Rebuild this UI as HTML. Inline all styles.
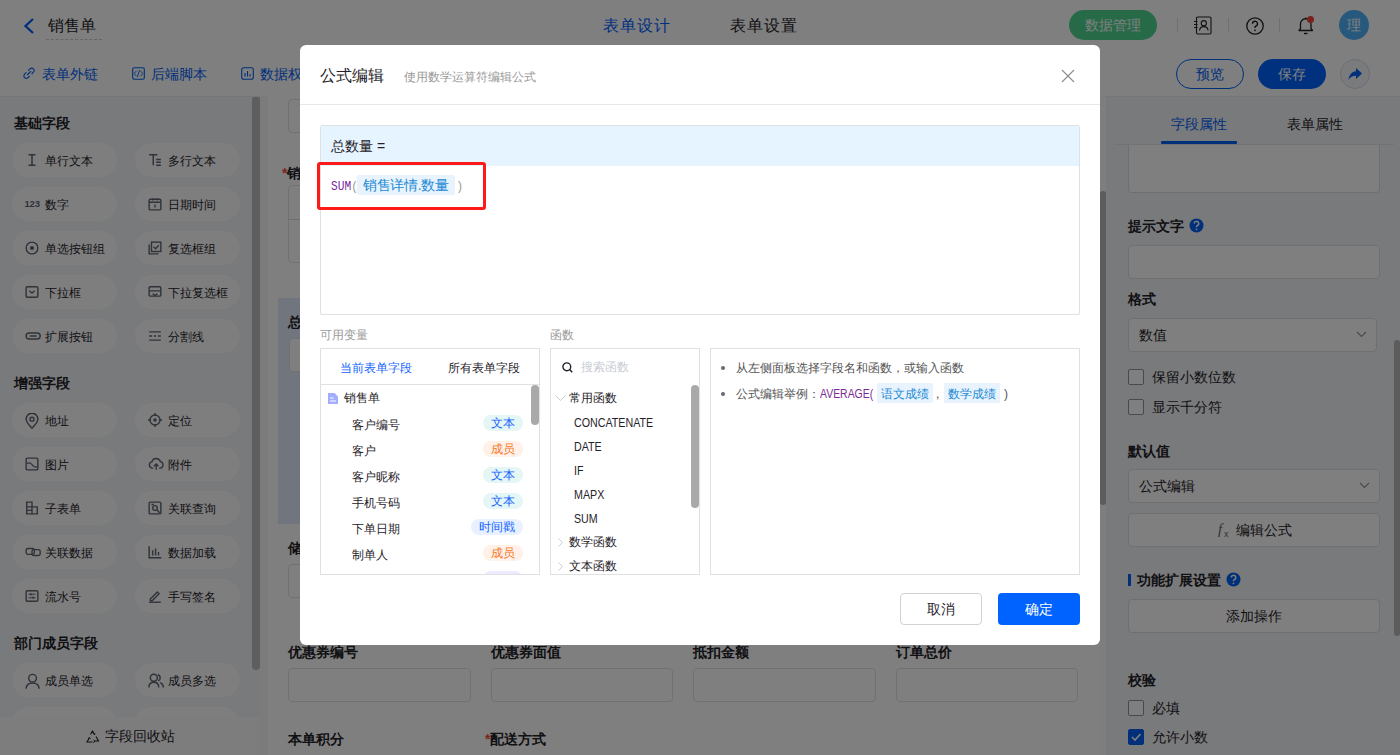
<!DOCTYPE html>
<html><head><meta charset="utf-8">
<style>
*{box-sizing:border-box;margin:0;padding:0}
html,body{width:1400px;height:755px;overflow:hidden;background:#fff;font-family:"Liberation Sans",sans-serif;color:#1f2329}
.a{position:absolute}
svg{display:block}
/* header */
#hdr{left:0;top:0;width:1400px;height:51px;background:#fff;border-bottom:1px solid #e6e6e6}
#tb{left:0;top:50px;width:1400px;height:46px;background:#fff}
.tl{font-size:14px;color:#0060f5;line-height:14px;white-space:nowrap}
/* left panel */
#lp{left:0;top:96px;width:260px;height:659px;background:#f3f4f6}
.sec{font-size:14px;font-weight:bold;color:#1f2329;line-height:14px;left:14px;white-space:nowrap}
.pill{width:105px;height:34px;border-radius:17px;background:#fdfdfe}
.pill span{position:absolute;left:33px;top:12px;font-size:12px;line-height:12px;color:#1f2329;white-space:nowrap}
.pill svg{position:absolute;left:14px;top:11px;transform:scale(1.17);transform-origin:6px 6px}
/* canvas */
#cv{left:260px;top:96px;width:846px;height:659px;background:#fff}
.lbl{font-size:14px;font-weight:bold;line-height:14px;color:#1f2329;white-space:nowrap}
.inp{border:1px solid #e1e3e8;border-radius:4px;background:#fff}
/* right panel */
#rp{left:1106px;top:96px;width:294px;height:659px;background:#f3f4f7}
.rl{font-size:14px;font-weight:bold;line-height:14px;color:#1f2329;white-space:nowrap;left:1128px}
.rinp{left:1128px;width:252px;height:34px;border:1px solid #dcdfe6;border-radius:4px;background:#fff}
.cb{width:16px;height:16px;border:1px solid #8f959e;border-radius:2px;background:#fff;left:1128px}
.ct{font-size:14px;line-height:14px;color:#1f2329;left:1152px;white-space:nowrap}
/* mask */
#mask{left:0;top:0;width:1400px;height:755px;background:rgba(0,0,0,.5)}
/* modal */
#md{left:300px;top:45px;width:800px;height:600px;background:#fff;border-radius:6px;overflow:hidden}
.m{position:absolute}
.gray{color:#999}
.tag{position:absolute;height:16px;border-radius:8px;font-size:12px;line-height:17px;text-align:center}
.t-txt{background:#e5f6f7;color:#1665ff;width:40px;left:162px}
.t-mem{background:#fff0e8;color:#f5792a;width:40px;left:162px}
.t-time{background:#e8f1ff;color:#1665ff;width:52px;left:150px}
.vrow{position:absolute;left:31px;font-size:12px;line-height:12px;color:#1f2329;white-space:nowrap}
.frow{position:absolute;left:23px;font-size:12px;line-height:12px;color:#1f2329;white-space:nowrap;transform:scaleX(0.89);transform-origin:0 0}
</style></head><body>

<!-- ================= BACKGROUND APP ================= -->
<div id="hdr" class="a"></div>
<div class="a" style="left:23px;top:18px"><svg width="12" height="16" viewBox="0 0 12 16"><path d="M10 1 L2.5 8 L10 15" fill="none" stroke="#0060f5" stroke-width="2.3"/></svg></div>
<div class="a" style="left:48px;top:18px;font-size:16px;line-height:16px;color:#1f2329">销售单</div>
<div class="a" style="left:46px;top:39px;width:56px;border-top:1px dashed #c9cdd4"></div>
<div class="a" style="left:603px;top:18px;font-size:16px;line-height:16px;color:#0062ff;letter-spacing:1px">表单设计</div>
<div class="a" style="left:730px;top:18px;font-size:16px;line-height:16px;color:#1f2329;letter-spacing:1px">表单设置</div>
<div class="a" style="left:1069px;top:10px;width:88px;height:30px;border-radius:15px;background:#4dd491"></div>
<div class="a" style="left:1085px;top:17px;font-size:14px;line-height:16px;color:#fff">数据管理</div>
<div class="a" style="left:1177px;top:18px;width:1px;height:14px;background:#dcdfe6"></div>
<div class="a" style="left:1193px;top:16px"><svg width="19" height="19" viewBox="0 0 19 19"><rect x="3.5" y="1" width="14.5" height="17" rx="1.2" stroke="#1f2329" stroke-width="1.1" fill="none"/><circle cx="10.8" cy="7.2" r="2.6" stroke="#1f2329" stroke-width="1.1" fill="none"/><path d="M6.5 14.5C6.8 11.8 8.5 10.6 10.8 10.6S14.8 11.8 15.1 14.5" stroke="#1f2329" stroke-width="1.1" fill="none"/><path d="M1 5.5H4.5M1 8.5H4.5M1 11.5H4.5" stroke="#1f2329" stroke-width="1.1"/></svg></div>
<div class="a" style="left:1228px;top:18px;width:1px;height:14px;background:#dcdfe6"></div>
<div class="a" style="left:1246px;top:17px"><svg width="18" height="18" viewBox="0 0 18 18"><circle cx="9" cy="9" r="8.2" stroke="#1f2329" stroke-width="1.3" fill="none"/><path d="M6.5 6.8A2.5 2.5 0 1 1 9.8 9.1C9.2 9.4 9 9.8 9 10.6V11" stroke="#1f2329" stroke-width="1.4" fill="none"/><circle cx="9" cy="13.3" r="0.9" fill="#1f2329"/></svg></div>
<div class="a" style="left:1279px;top:18px;width:1px;height:14px;background:#dcdfe6"></div>
<div class="a" style="left:1297px;top:16px"><svg width="18" height="19" viewBox="0 0 18 19"><path d="M2 14.5H15.5L14 12.5V8A5 5 0 0 0 3.5 8V12.5Z" stroke="#1f2329" stroke-width="1.3" fill="none" stroke-linejoin="round"/><path d="M7 17.5H10.5" stroke="#1f2329" stroke-width="1.4"/><path d="M8.75 1.5V3" stroke="#1f2329" stroke-width="1.3"/></svg></div>
<div class="a" style="left:1306.5px;top:15.5px;width:7px;height:7px;border-radius:4px;background:#f04134"></div>
<div class="a" style="left:1339px;top:10px;width:30px;height:30px;border-radius:15px;background:#4fb3fb;color:#fff;font-size:14px;line-height:30px;text-align:center">理</div>


<div id="tb" class="a"></div>
<div class="a tl" style="left:42px;top:67px">表单外链</div>
<div class="a tl" style="left:151px;top:67px">后端脚本</div>
<div class="a tl" style="left:260px;top:67px">数据权限</div>
<div class="a" style="left:23px;top:67px"><svg width="12" height="13" viewBox="0 0 12 13"><path d="M5.2 3.6L7 1.8A2.4 2.4 0 0 1 10.4 5.2L8.6 7M3.4 5.4L1.6 7.2A2.4 2.4 0 0 0 5 10.6L6.8 8.8M4.2 8L8 4.2" stroke="#0060f5" stroke-width="1.1" fill="none"/></svg></div>
<div class="a" style="left:132px;top:67px"><svg width="13" height="13" viewBox="0 0 13 13"><rect x="0.7" y="0.7" width="11.6" height="11.6" rx="1.5" stroke="#0060f5" stroke-width="1.1" fill="none"/><path d="M4.5 3.8L2.2 6.5L4.5 9.2M8.5 3.8L10.8 6.5L8.5 9.2M7.6 3L5.4 10" stroke="#0060f5" stroke-width="0.9" fill="none"/></svg></div>
<div class="a" style="left:241px;top:67px"><svg width="13" height="13" viewBox="0 0 13 13"><rect x="0.7" y="0.7" width="11.6" height="11.6" rx="2" stroke="#0060f5" stroke-width="1.1" fill="none"/><path d="M4 6V9.5M6.5 4V9.5M9 7V9.5" stroke="#0060f5" stroke-width="1.1"/></svg></div>
<div class="a" style="left:1176px;top:59px;width:68px;height:30px;border:1px solid #0060f5;border-radius:15px;color:#0060f5;font-size:14px;line-height:28px;text-align:center">预览</div>
<div class="a" style="left:1258px;top:59px;width:68px;height:30px;background:#0062ff;border-radius:15px;color:#fff;font-size:14px;line-height:30px;text-align:center">保存</div>
<div class="a" style="left:1340px;top:59px;width:30px;height:30px;border:1px solid #d6dbe6;border-radius:15px;background:#f5f7fb"></div>
<div class="a" style="left:1347px;top:66px"><svg width="16" height="16" viewBox="0 0 16 16"><path d="M9 2L15 7.5L9 13V9.8C5.5 9.8 3.2 11 1.5 14C2 9 4.5 5.8 9 5.3Z" fill="#0060f5"/></svg></div>


<div id="lp" class="a"></div>
<div class="a sec" style="top:116px">基础字段</div>
<div class="a sec" style="top:376px">增强字段</div>
<div class="a sec" style="top:636px">部门成员字段</div>
<div class="a pill" style="left:12px;top:143px"><svg width="12" height="12" viewBox="0 0 12 12"><path d="M3 1.5H9M3 10.5H9M6 1.5V10.5" stroke="#5f6672" stroke-width="1.3" fill="none"/></svg><span>单行文本</span></div>
<div class="a pill" style="left:135px;top:143px"><svg width="12" height="12" viewBox="0 0 12 12"><path d="M1 1.5H8M4.5 1.5V10.5M7 5.5H11M7 8H11M7 10.5H11" stroke="#5f6672" stroke-width="1.25" fill="none"/></svg><span>多行文本</span></div>
<div class="a pill" style="left:12px;top:187px"><svg width="17" height="12" viewBox="0 0 17 12" style="transform:none;left:12px;top:11px"><text x="0.5" y="9" style="font:bold 9.5px 'Liberation Sans'" fill="#5b6577" letter-spacing="-0.2">123</text></svg><span>数字</span></div>
<div class="a pill" style="left:135px;top:187px"><svg width="12" height="12" viewBox="0 0 12 12"><rect x="1" y="2" width="10" height="9" rx="1" stroke="#5f6672" stroke-width="1.2" fill="none"/><path d="M1 4.5H11M4 1V3M8 1V3M6 6.5V9" stroke="#5f6672" stroke-width="1.2"/></svg><span>日期时间</span></div>
<div class="a pill" style="left:12px;top:231px"><svg width="12" height="12" viewBox="0 0 12 12"><circle cx="6" cy="6" r="5" stroke="#5f6672" stroke-width="1.2" fill="none"/><circle cx="6" cy="6" r="1.8" fill="#5f6672"/></svg><span>单选按钮组</span></div>
<div class="a pill" style="left:135px;top:231px"><svg width="12" height="12" viewBox="0 0 12 12"><path d="M1 3V11H9" stroke="#5f6672" stroke-width="1.2" fill="none"/><rect x="3" y="1" width="8" height="8" stroke="#5f6672" stroke-width="1.2" fill="none"/><path d="M4.8 5L6.5 6.6L9.2 3.6" stroke="#5f6672" stroke-width="1.2" fill="none"/></svg><span>复选框组</span></div>
<div class="a pill" style="left:12px;top:275px"><svg width="12" height="12" viewBox="0 0 12 12"><rect x="1" y="1.5" width="10" height="9" rx="1" stroke="#5f6672" stroke-width="1.2" fill="none"/><path d="M3.8 5L6 7L8.2 5" stroke="#5f6672" stroke-width="1.2" fill="none"/></svg><span>下拉框</span></div>
<div class="a pill" style="left:135px;top:275px"><svg width="12" height="12" viewBox="0 0 12 12"><rect x="1" y="1.5" width="10" height="8" rx="1" stroke="#5f6672" stroke-width="1.2" fill="none"/><path d="M1 5H11M4 7.5L6 9L8 7.5" stroke="#5f6672" stroke-width="1.2" fill="none"/></svg><span>下拉复选框</span></div>
<div class="a pill" style="left:12px;top:319px"><svg width="14" height="12" viewBox="0 0 14 12"><rect x="1" y="3.5" width="12" height="5" rx="2.5" stroke="#5f6672" stroke-width="1.25" fill="none"/><path d="M4 6H10" stroke="#5f6672" stroke-width="1.2"/></svg><span>扩展按钮</span></div>
<div class="a pill" style="left:135px;top:319px"><svg width="12" height="12" viewBox="0 0 12 12"><path d="M1 2.5H11M1 9.5H11M1 6H3.5M5 6H7M8.5 6H11" stroke="#5f6672" stroke-width="1.2"/></svg><span>分割线</span></div>
<div class="a pill" style="left:12px;top:403px"><svg width="12" height="14" viewBox="0 0 12 14"><path d="M6 13C6 13 1 8 1 5.2A5 5 0 0 1 11 5.2C11 8 6 13 6 13Z" stroke="#5f6672" stroke-width="1.25" fill="none"/><circle cx="6" cy="5.3" r="1.7" stroke="#5f6672" stroke-width="1.2" fill="none"/></svg><span>地址</span></div>
<div class="a pill" style="left:135px;top:403px"><svg width="12" height="12" viewBox="0 0 12 12"><circle cx="6" cy="6" r="4.3" stroke="#5f6672" stroke-width="1.2" fill="none"/><circle cx="6" cy="6" r="1.5" fill="#5f6672"/><path d="M6 0V2.5M6 9.5V12M0 6H2.5M9.5 6H12" stroke="#5f6672" stroke-width="1.2"/></svg><span>定位</span></div>
<div class="a pill" style="left:12px;top:447px"><svg width="12" height="12" viewBox="0 0 12 12"><rect x="1" y="1" width="10" height="10" rx="1" stroke="#5f6672" stroke-width="1.2" fill="none"/><path d="M1.5 5.5C3.5 4.5 5 5 6 6.5S8.5 9 10.5 8.5" stroke="#5f6672" stroke-width="1.1" fill="none"/></svg><span>图片</span></div>
<div class="a pill" style="left:135px;top:447px"><svg width="14" height="12" viewBox="0 0 14 12"><path d="M4.5 9.5H3.5A2.7 2.7 0 0 1 3.3 4.2A3.8 3.8 0 0 1 10.6 4A2.8 2.8 0 0 1 10.5 9.5H9.5" stroke="#5f6672" stroke-width="1.2" fill="none"/><path d="M7 11V6M5 8L7 6L9 8" stroke="#5f6672" stroke-width="1.2" fill="none"/></svg><span>附件</span></div>
<div class="a pill" style="left:12px;top:491px"><svg width="12" height="12" viewBox="0 0 12 12"><path d="M1.5 1H6V11H1.5ZM6 5H10.5V11H6M1.5 5H6M1.5 8H6" stroke="#5f6672" stroke-width="1.2" fill="none"/></svg><span>子表单</span></div>
<div class="a pill" style="left:135px;top:491px"><svg width="12" height="12" viewBox="0 0 12 12"><rect x="1" y="1" width="10" height="10" rx="1" stroke="#5f6672" stroke-width="1.2" fill="none"/><circle cx="6" cy="6" r="2" stroke="#5f6672" stroke-width="1.2" fill="none"/><path d="M7.5 7.5L10 10M3 3H5" stroke="#5f6672" stroke-width="1.2"/></svg><span>关联查询</span></div>
<div class="a pill" style="left:12px;top:535px"><svg width="14" height="12" viewBox="0 0 14 12"><rect x="1" y="3" width="7" height="5" rx="1.5" stroke="#5f6672" stroke-width="1.2" fill="none"/><rect x="6" y="4" width="7" height="5" rx="1.5" stroke="#5f6672" stroke-width="1.2" fill="none"/></svg><span>关联数据</span></div>
<div class="a pill" style="left:135px;top:535px"><svg width="12" height="12" viewBox="0 0 12 12"><path d="M1 1V11H11.5M4 4.5V9M6.5 3V9M9 6V9" stroke="#5f6672" stroke-width="1.25" fill="none"/></svg><span>数据加载</span></div>
<div class="a pill" style="left:12px;top:579px"><svg width="12" height="12" viewBox="0 0 12 12"><rect x="1" y="1.5" width="10" height="9" rx="1" stroke="#5f6672" stroke-width="1.2" fill="none"/><path d="M3 4.5H9M3 7.5H9M5 3.5V5.5M7 6.5V8.5" stroke="#5f6672" stroke-width="1"/></svg><span>流水号</span></div>
<div class="a pill" style="left:135px;top:579px"><svg width="12" height="12" viewBox="0 0 12 12"><path d="M2 8.5L8 2.5L9.5 4L3.5 10H2Z" stroke="#5f6672" stroke-width="1.2" fill="none"/><path d="M1 11.3H11" stroke="#5f6672" stroke-width="1.2"/></svg><span>手写签名</span></div>
<div class="a pill" style="left:12px;top:663px"><svg width="13" height="14" viewBox="0 0 13 14"><circle cx="6.5" cy="4.5" r="3.3" stroke="#5f6672" stroke-width="1.25" fill="none"/><path d="M1 13.5C1 10 3.5 8.5 6.5 8.5S12 10 12 13.5" stroke="#5f6672" stroke-width="1.25" fill="none"/></svg><span>成员单选</span></div>
<div class="a pill" style="left:135px;top:663px"><svg width="14" height="13" viewBox="0 0 14 13"><circle cx="5" cy="4" r="3" stroke="#5f6672" stroke-width="1.25" fill="none"/><path d="M0.8 12.5C0.8 9.5 2.5 8 5 8S9.2 9.5 9.2 12.5M8.5 1.3A3 3 0 0 1 8.8 6.8M10.5 8.3C12 9 13.2 10.5 13.2 12.5" stroke="#5f6672" stroke-width="1.25" fill="none"/></svg><span>成员多选</span></div>
<div class="a pill" style="left:12px;top:707px"><svg width="13" height="14" viewBox="0 0 13 14"><circle cx="6.5" cy="4.5" r="3.3" stroke="#5f6672" stroke-width="1.25" fill="none"/><path d="M1 13.5C1 10 3.5 8.5 6.5 8.5S12 10 12 13.5" stroke="#5f6672" stroke-width="1.25" fill="none"/></svg><span>部门单选</span></div>
<div class="a pill" style="left:135px;top:707px"><svg width="14" height="13" viewBox="0 0 14 13"><circle cx="5" cy="4" r="3" stroke="#5f6672" stroke-width="1.25" fill="none"/><path d="M0.8 12.5C0.8 9.5 2.5 8 5 8S9.2 9.5 9.2 12.5M8.5 1.3A3 3 0 0 1 8.8 6.8M10.5 8.3C12 9 13.2 10.5 13.2 12.5" stroke="#5f6672" stroke-width="1.25" fill="none"/></svg><span>部门多选</span></div>
<div class="a" style="left:252px;top:96px;width:8px;height:574px;border-radius:4px;background:#bdbdbd"></div>
<div class="a" style="left:0;top:717px;width:260px;height:38px;background:#fbfbfc"></div>
<div class="a" style="left:85px;top:730px"><svg width="15" height="14" viewBox="0 0 15 14"><path d="M5.5 4.5L7.5 1L9.5 4.5M11 6.5L13.5 11H9.5M7.5 12H2L4.5 7.5" stroke="#1f2329" stroke-width="1.1" fill="none"/><path d="M8.5 4L9.6 4.6L10.2 3.4M8.8 12.8L9.6 11L8.6 9.8M3.2 8.6L4.6 7.6L5.6 8.6" stroke="#1f2329" stroke-width="1" fill="none"/></svg></div>
<div class="a" style="left:105px;top:729px;font-size:14px;line-height:14px;color:#1f2329">字段回收站</div>

<div id="cv" class="a"></div>
<div class="a" style="left:0;top:96px;width:260px;height:1px;background:#ebecef"></div>

<div class="a" style="left:260px;top:96px;width:8px;height:659px;background:#f7f7f7"></div>
<div class="a inp" style="left:288px;top:99px;width:400px;height:34px"></div>
<div class="a lbl" style="left:282px;top:166px"><span style="color:#f54a45">*</span>销售详情</div>
<div class="a inp" style="left:288px;top:185px;width:790px;height:78px"></div>
<div class="a" style="left:289px;top:219px;width:788px;border-top:1px solid #dcdfe6"></div>
<div class="a" style="left:278px;top:298px;width:810px;height:226px;background:#e3ebfb"></div>
<div class="a lbl" style="left:288px;top:315px">总数量</div>
<div class="a inp" style="left:289px;top:338px;width:400px;height:34px"></div>
<div class="a lbl" style="left:288px;top:541px">储值</div>
<div class="a inp" style="left:288px;top:564px;width:183px;height:34px"></div>
<div class="a lbl" style="left:288px;top:645px">优惠券编号</div>
<div class="a lbl" style="left:491px;top:645px">优惠券面值</div>
<div class="a lbl" style="left:693px;top:645px">抵扣金额</div>
<div class="a lbl" style="left:896px;top:645px">订单总价</div>
<div class="a inp" style="left:288px;top:668px;width:183px;height:34px"></div>
<div class="a inp" style="left:491px;top:668px;width:182px;height:34px"></div>
<div class="a inp" style="left:693px;top:668px;width:183px;height:34px"></div>
<div class="a inp" style="left:896px;top:668px;width:182px;height:34px"></div>
<div class="a lbl" style="left:288px;top:732px">本单积分</div>
<div class="a lbl" style="left:485px;top:732px"><span style="color:#f54a45">*</span>配送方式</div>
<div class="a" style="left:1100px;top:96px;width:6px;height:659px;background:#fdfdfd"></div>
<div class="a" style="left:1100px;top:191px;width:6px;height:314px;border-radius:3px;background:#b8b8b8"></div>

<div id="rp" class="a"></div>
<div class="a" style="left:1106px;top:96px;width:294px;height:1px;background:#ebecef"></div>

<div class="a" style="left:1171px;top:117px;font-size:14px;line-height:14px;color:#0060f5">字段属性</div>
<div class="a" style="left:1287px;top:117px;font-size:14px;line-height:14px;color:#1f2329">表单属性</div>
<div class="a" style="left:1114px;top:144px;width:280px;border-top:1px solid #e4e6ea"></div>
<div class="a" style="left:1161px;top:141px;width:76px;height:3px;background:#0060f5;border-radius:1px"></div>
<div class="a rinp" style="top:145px;height:48px;border-top:none;border-radius:0 0 4px 4px"></div>
<div class="a rl" style="top:219px">提示文字</div>
<div class="a" style="left:1189px;top:218px"><svg width="15" height="15" viewBox="0 0 15 15"><circle cx="7.5" cy="7.5" r="7" fill="#0060f5"/><path d="M5.3 5.6A2.2 2.2 0 1 1 8.3 7.6C7.7 7.9 7.5 8.3 7.5 9V9.3" stroke="#fff" stroke-width="1.5" fill="none"/><circle cx="7.5" cy="11.3" r="0.9" fill="#fff"/></svg></div>
<div class="a rinp" style="top:245px;width:252px;height:34px"></div>
<div class="a rl" style="top:292px">格式</div>
<div class="a rinp" style="top:318px;width:249px;height:34px"></div>
<div class="a" style="left:1139px;top:328px;font-size:14px;line-height:14px;color:#1f2329">数值</div>
<div class="a" style="left:1356px;top:331px"><svg width="11" height="7" viewBox="0 0 11 7"><path d="M1 1L5.5 5.5L10 1" stroke="#8f959e" stroke-width="1.2" fill="none"/></svg></div>
<div class="a cb" style="top:369px"></div>
<div class="a ct" style="top:370px">保留小数位数</div>
<div class="a cb" style="top:399px"></div>
<div class="a ct" style="top:400px">显示千分符</div>
<div class="a rl" style="top:444px">默认值</div>
<div class="a rinp" style="top:469px;height:34px"></div>
<div class="a" style="left:1139px;top:479px;font-size:14px;line-height:14px;color:#1f2329">公式编辑</div>
<div class="a" style="left:1359px;top:482px"><svg width="11" height="7" viewBox="0 0 11 7"><path d="M1 1L5.5 5.5L10 1" stroke="#8f959e" stroke-width="1.2" fill="none"/></svg></div>
<div class="a rinp" style="top:513px;height:34px"></div>
<div class="a" style="left:1217px;top:522px"><svg width="14" height="16" viewBox="0 0 14 16"><text x="1" y="12" font-family="Liberation Serif" font-style="italic" font-size="15" fill="#5f6672">f</text><text x="7" y="14.5" font-family="Liberation Sans" font-size="9" fill="#5f6672">x</text></svg></div>
<div class="a" style="left:1236px;top:523px;font-size:14px;line-height:14px;color:#1f2329">编辑公式</div>
<div class="a" style="left:1128px;top:574px;width:3px;height:12px;background:#0060f5"></div>
<div class="a rl" style="left:1137px;top:573px">功能扩展设置</div>
<div class="a" style="left:1226px;top:572px"><svg width="15" height="15" viewBox="0 0 15 15"><circle cx="7.5" cy="7.5" r="7" fill="#0060f5"/><path d="M5.3 5.6A2.2 2.2 0 1 1 8.3 7.6C7.7 7.9 7.5 8.3 7.5 9V9.3" stroke="#fff" stroke-width="1.5" fill="none"/><circle cx="7.5" cy="11.3" r="0.9" fill="#fff"/></svg></div>
<div class="a rinp" style="top:599px;height:34px"></div>
<div class="a" style="left:1226px;top:609px;font-size:14px;line-height:14px;color:#1f2329">添加操作</div>
<div class="a rl" style="top:673px">校验</div>
<div class="a cb" style="top:700px"></div>
<div class="a ct" style="top:701px">必填</div>
<div class="a cb" style="top:729px;background:#0060f5;border-color:#0060f5"><svg width="14" height="14" viewBox="0 0 14 14"><path d="M3 7L6 10L11.5 4" stroke="#fff" stroke-width="1.6" fill="none"/></svg></div>
<div class="a ct" style="top:730px">允许小数</div>
<div class="a" style="left:1394px;top:340px;width:6px;height:296px;border-radius:3px;background:#b8b8b8"></div>


<div id="mask" class="a"></div>

<!-- ================= MODAL ================= -->
<div id="md" class="a">
  <div class="m" style="left:20px;top:23px;font-size:16px;line-height:16px;color:#1f2329">公式编辑</div>
  <div class="m" style="left:104px;top:26px;font-size:12px;line-height:12px;color:#999">使用数学运算符编辑公式</div>
  <div class="m" style="left:761px;top:24px"><svg width="14" height="14" viewBox="0 0 14 14"><path d="M1 1L13 13M13 1L1 13" stroke="#8f8f8f" stroke-width="1.15"/></svg></div>
  <div class="m" style="left:0;top:59px;width:800px;border-top:1px solid #e8e8e8"></div>

  <!-- formula box -->
  <div class="m" style="left:20px;top:80px;width:760px;height:190px;border:1px solid #dfe0e2;border-radius:2px;overflow:hidden">
    <div class="m" style="left:0;top:0;width:758px;height:40px;background:#e6f4ff"></div>
    <div class="m" style="left:10px;top:13px;font-size:14px;line-height:14px;color:#1f2329">总数量 =</div>
    <div class="m" style="left:10px;top:54px;font-family:'Liberation Mono',monospace;font-size:13px;line-height:13px;color:#7a1fa2;white-space:nowrap;transform:scaleX(0.86);transform-origin:0 0">SUM<span style="color:#999">(</span></div>
    <div class="m" style="left:36px;top:49px;width:98px;height:20px;background:#e8f3fe;border-radius:2px"></div>
    <div class="m" style="left:42px;top:52px;font-size:14px;line-height:14px;color:#1a8ad4;white-space:nowrap;letter-spacing:-0.3px">销售详情.数量</div>
    <div class="m" style="left:137px;top:54px;font-size:12px;line-height:12px;color:#999">)</div>

  </div>
  <div class="m" style="left:17px;top:117px;width:169px;height:48px;border:3px solid #ff1a1a;border-radius:3px"></div>

  <div class="m" style="left:20px;top:284px;font-size:12px;line-height:12px;color:#999">可用变量</div>
  <div class="m" style="left:250px;top:284px;font-size:12px;line-height:12px;color:#999">函数</div>

  <!-- variables -->
  <div class="m" style="left:20px;top:303px;width:220px;height:227px;border:1px solid #dfe0e2;overflow:hidden">
<div class="m" style="left:19px;top:13px;font-size:12px;line-height:12px;color:#1665ff;white-space:nowrap">当前表单字段</div>
<div class="m" style="left:127px;top:13px;font-size:12px;line-height:12px;color:#1f2329;white-space:nowrap">所有表单字段</div>
<div class="m" style="left:0;top:35px;width:218px;border-top:1px solid #dfe0e2"></div>
<div class="m" style="left:210px;top:36px;width:8px;height:40px;border-radius:4px;background:#a9a9a9"></div>
<div class="m" style="left:7px;top:44px"><svg width="10" height="11" viewBox="0 0 10 11"><path d="M0 0H6.5L10 3.5V11H0Z" fill="#a3acff"/><path d="M2 5H5.5M2 8H8" stroke="#fff" stroke-width="1.2"/></svg></div>
<div class="vrow" style="left:23px;top:43px">销售单</div>
<div class="vrow" style="top:70px">客户编号</div>
<div class="tag t-txt" style="top:66px">文本</div>
<div class="vrow" style="top:96px">客户</div>
<div class="tag t-mem" style="top:92px">成员</div>
<div class="vrow" style="top:122px">客户昵称</div>
<div class="tag t-txt" style="top:118px">文本</div>
<div class="vrow" style="top:148px">手机号码</div>
<div class="tag t-txt" style="top:144px">文本</div>
<div class="vrow" style="top:174px">下单日期</div>
<div class="tag t-time" style="top:170px">时间戳</div>
<div class="vrow" style="top:200px">制单人</div>
<div class="tag t-mem" style="top:196px">成员</div>
<div class="tag" style="top:222px;left:162px;width:40px;background:#efeaff"></div>
  </div>
  <!-- functions -->
  <div class="m" style="left:250px;top:303px;width:150px;height:227px;border:1px solid #dfe0e2;overflow:hidden">
<div class="m" style="left:11px;top:13px"><svg width="11" height="11" viewBox="0 0 11 11"><circle cx="4.8" cy="4.8" r="3.9" stroke="#1f2329" stroke-width="1.4" fill="none"/><path d="M7.6 7.6L10.2 10.2" stroke="#1f2329" stroke-width="1.4"/></svg></div>
<div class="m" style="left:30px;top:12px;font-size:12px;line-height:12px;color:#c9cdd4;white-space:nowrap">搜索函数</div>
<div class="m" style="left:0;top:34px;width:148px;border-top:0px solid #dcdfe6"></div>
<div class="m" style="left:140px;top:36px;width:8px;height:123px;border-radius:4px;background:#a9a9a9"></div>
<div class="m" style="left:4px;top:46px"><svg width="11" height="7" viewBox="0 0 11 7"><path d="M0.5 0.5L5.5 5.5L10.5 0.5" stroke="#c9cdd4" stroke-width="1" fill="none"/></svg></div>
<div class="vrow" style="left:18px;top:43px">常用函数</div>
<div class="frow" style="top:68px">CONCATENATE</div>
<div class="frow" style="top:92px">DATE</div>
<div class="frow" style="top:116px">IF</div>
<div class="frow" style="top:140px">MAPX</div>
<div class="frow" style="top:164px">SUM</div>
<div class="m" style="left:7px;top:189px"><svg width="5" height="9" viewBox="0 0 5 9"><path d="M0.5 0.5L4.5 4.5L0.5 8.5" stroke="#c9cdd4" stroke-width="1" fill="none"/></svg></div>
<div class="vrow" style="left:18px;top:187px">数学函数</div>
<div class="m" style="left:7px;top:213px"><svg width="5" height="9" viewBox="0 0 5 9"><path d="M0.5 0.5L4.5 4.5L0.5 8.5" stroke="#c9cdd4" stroke-width="1" fill="none"/></svg></div>
<div class="vrow" style="left:18px;top:211px">文本函数</div>
  </div>
  <!-- description -->
  <div class="m" style="left:410px;top:303px;width:370px;height:227px;border:1px solid #dfe0e2">

<div class="m" style="left:10px;top:17px;width:4px;height:4px;border-radius:2px;background:#646a73"></div>
<div class="m" style="left:25px;top:13px;font-size:12px;line-height:12px;color:#555;white-space:nowrap">从左侧面板选择字段名和函数，或输入函数</div>
<div class="m" style="left:10px;top:43px;width:4px;height:4px;border-radius:2px;background:#646a73"></div>
<div class="m" style="left:25px;top:39px;font-size:12px;line-height:12px;color:#555;white-space:nowrap">公式编辑举例：<span style="color:#7d2a98;display:inline-block;transform:scaleX(0.87);transform-origin:0 0">AVERAGE(</span></div>
<div class="m" style="left:166px;top:34px;width:56px;height:20px;background:#e8f3fe;border-radius:2px"></div>
<div class="m" style="left:170px;top:39px;font-size:12px;line-height:12px;color:#1a8ad4;white-space:nowrap">语文成绩</div>
<div class="m" style="left:225px;top:39px;font-size:12px;line-height:12px;color:#555">,</div>
<div class="m" style="left:233px;top:34px;width:56px;height:20px;background:#e8f3fe;border-radius:2px"></div>
<div class="m" style="left:237px;top:39px;font-size:12px;line-height:12px;color:#1a8ad4;white-space:nowrap">数学成绩</div>
<div class="m" style="left:293px;top:39px;font-size:12px;line-height:12px;color:#555">)</div>

  </div>

  <div class="m" style="left:600px;top:548px;width:82px;height:32px;border:1px solid #d0d3d6;border-radius:4px;font-size:14px;line-height:30px;text-align:center;color:#1f2329">取消</div>
  <div class="m" style="left:698px;top:548px;width:82px;height:32px;background:#0062ff;border-radius:4px;font-size:14px;line-height:32px;text-align:center;color:#fff">确定</div>
</div>

</body></html>
